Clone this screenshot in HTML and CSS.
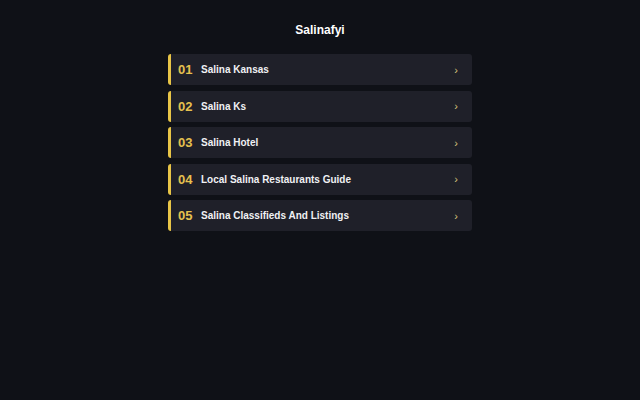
FILE: index.html
```html
<!DOCTYPE html>
<html lang="en">
<head>
    <meta charset="UTF-8">
    <meta name="viewport" content="width=device-width, initial-scale=1.0">
    <title>Salinafyi</title>
    <link rel="stylesheet" href="styles.css">
</head>
<body>
    <div class="wrap">
        <h1 class="site-title">Salinafyi</h1>

        <ul class="link-list">
            <li class="link-item">
                <span class="num">01</span>
                <span class="label">Salina Kansas</span>
                <span class="arrow">&#8250;</span>
            </li>
            <li class="link-item">
                <span class="num">02</span>
                <span class="label">Salina Ks</span>
                <span class="arrow">&#8250;</span>
            </li>
            <li class="link-item">
                <span class="num">03</span>
                <span class="label">Salina Hotel</span>
                <span class="arrow">&#8250;</span>
            </li>
            <li class="link-item">
                <span class="num">04</span>
                <span class="label">Local Salina Restaurants Guide</span>
                <span class="arrow">&#8250;</span>
            </li>
            <li class="link-item">
                <span class="num">05</span>
                <span class="label">Salina Classifieds And Listings</span>
                <span class="arrow">&#8250;</span>
            </li>
        </ul>
    </div>
</body>
</html>
```

FILE: styles.css
```css
/* Page */
body {
    margin: 0;
    background: #0f1117;
    font-family: 'Liberation Sans', Arial, sans-serif;
    color: #e5e7eb;
}

.wrap {
    width: 304px;
    margin: 0 auto;
    padding-top: 23px;
}

.site-title {
    margin: 0 0 16px;
    text-align: center;
    font-size: 12px;
    line-height: 15px;
    font-weight: bold;
    color: #ffffff;
}

/* List */
.link-list {
    list-style: none;
    margin: 0;
    padding: 0;
    display: flex;
    flex-direction: column;
    gap: 5.5px;
}

.link-item {
    display: flex;
    align-items: center;
    height: 31px;
    box-sizing: border-box;
    padding: 0 14px 0 7px;
    background: #1f2029;
    border-left: 3px solid #e8c547;
    border-radius: 3px;
}

.num {
    font-size: 13px;
    font-weight: bold;
    color: #e6c04f;
    width: 23px;
}

.label {
    flex: 1;
    font-size: 10px;
    font-weight: bold;
    color: #f0f1f4;
}

.arrow {
    font-size: 11px;
    color: #d9c27a;
}
```
